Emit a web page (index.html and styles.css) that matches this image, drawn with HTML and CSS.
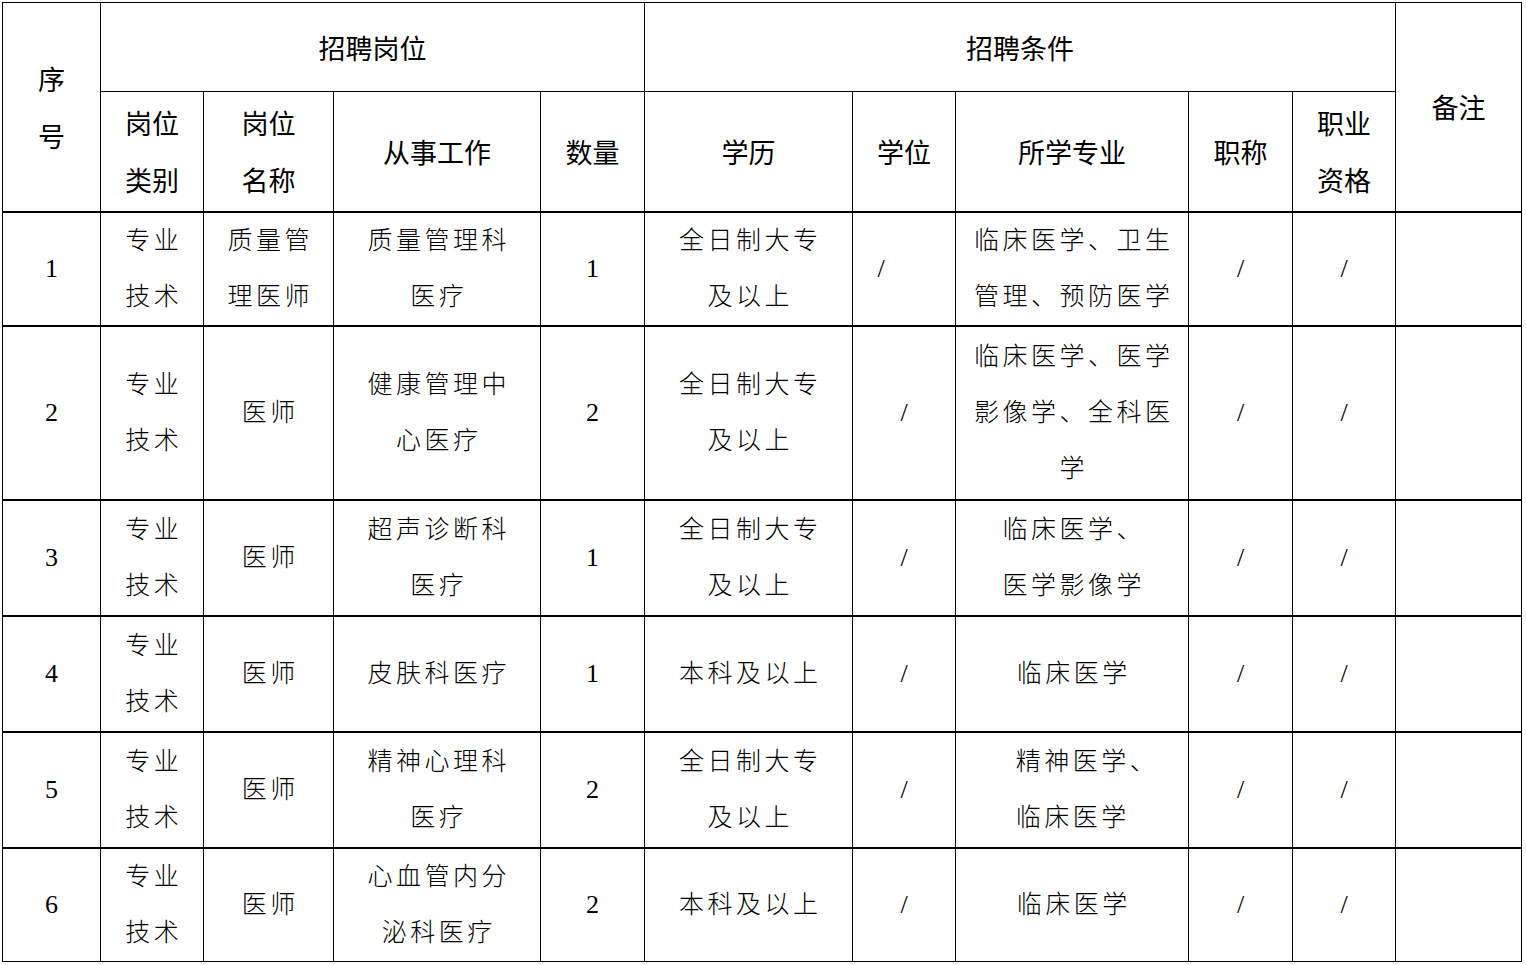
FILE: index.html
```html
<!DOCTYPE html>
<html lang="zh-CN">
<head>
<meta charset="utf-8">
<title>招聘岗位</title>
<link rel="stylesheet" href="styles.css">
</head>
<body>
<table class="tbl">
  <colgroup>
    <col class="c1"><col class="c2"><col class="c3"><col class="c4"><col class="c5"><col class="c6"><col class="c7"><col class="c8"><col class="c9"><col class="c10"><col class="c11">
  </colgroup>
  <thead>
    <tr class="h1">
      <th rowspan="2">序<br>号</th>
      <th colspan="4">招聘岗位</th>
      <th colspan="5">招聘条件</th>
      <th rowspan="2" class="note">备注</th>
    </tr>
    <tr class="h2">
      <th>岗位<br>类别</th>
      <th>岗位<br>名称</th>
      <th>从事工作</th>
      <th>数量</th>
      <th>学历</th>
      <th>学位</th>
      <th>所学专业</th>
      <th>职称</th>
      <th>职业<br>资格</th>
    </tr>
  </thead>
  <tbody>
    <tr class="r1">
      <td class="num">1</td>
      <td>专业<br>技术</td>
      <td>质量管<br>理医师</td>
      <td>质量管理科<br>医疗</td>
      <td class="num">1</td>
      <td>全日制大专<br>及以上</td>
      <td class="slash slash-left">/</td>
      <td>临床医学、卫生<br>管理、预防医学</td>
      <td class="slash">/</td>
      <td class="slash">/</td>
      <td></td>
    </tr>
    <tr class="r2">
      <td class="num">2</td>
      <td>专业<br>技术</td>
      <td>医师</td>
      <td>健康管理中<br>心医疗</td>
      <td class="num">2</td>
      <td>全日制大专<br>及以上</td>
      <td class="slash">/</td>
      <td>临床医学、医学<br>影像学、全科医<br>学</td>
      <td class="slash">/</td>
      <td class="slash">/</td>
      <td></td>
    </tr>
    <tr class="r3">
      <td class="num">3</td>
      <td>专业<br>技术</td>
      <td>医师</td>
      <td>超声诊断科<br>医疗</td>
      <td class="num">1</td>
      <td>全日制大专<br>及以上</td>
      <td class="slash">/</td>
      <td>临床医学、<br>医学影像学</td>
      <td class="slash">/</td>
      <td class="slash">/</td>
      <td></td>
    </tr>
    <tr class="r4">
      <td class="num">4</td>
      <td>专业<br>技术</td>
      <td>医师</td>
      <td>皮肤科医疗</td>
      <td class="num">1</td>
      <td>本科及以上</td>
      <td class="slash">/</td>
      <td>临床医学</td>
      <td class="slash">/</td>
      <td class="slash">/</td>
      <td></td>
    </tr>
    <tr class="r5">
      <td class="num">5</td>
      <td>专业<br>技术</td>
      <td>医师</td>
      <td>精神心理科<br>医疗</td>
      <td class="num">2</td>
      <td>全日制大专<br>及以上</td>
      <td class="slash">/</td>
      <td class="left-block"><span class="blk">精神医学、<br>临床医学</span></td>
      <td class="slash">/</td>
      <td class="slash">/</td>
      <td></td>
    </tr>
    <tr class="r6">
      <td class="num">6</td>
      <td>专业<br>技术</td>
      <td>医师</td>
      <td>心血管内分<br>泌科医疗</td>
      <td class="num">2</td>
      <td>本科及以上</td>
      <td class="slash">/</td>
      <td>临床医学</td>
      <td class="slash">/</td>
      <td class="slash">/</td>
      <td></td>
    </tr>
  </tbody>
</table>
</body>
</html>
```

FILE: styles.css
```css
html, body {
  margin: 0;
  padding: 0;
  background: #ffffff;
}

body {
  padding: 2px 0 0 2px;
}

.tbl {
  border-collapse: collapse;
  table-layout: fixed;
  width: 1519px;
  color: #000;
}

.c1 { width: 98px; }
.c2 { width: 103px; }
.c3 { width: 130px; }
.c4 { width: 207px; }
.c5 { width: 104px; }
.c6 { width: 208px; }
.c7 { width: 103px; }
.c8 { width: 233px; }
.c9 { width: 104px; }
.c10 { width: 103px; }
.c11 { width: 126px; }

.tbl th,
.tbl td {
  border: 1px solid #000;
  padding: 0;
  text-align: center;
  vertical-align: middle;
  line-height: 56px;
}

.tbl th {
  font-family: "Noto Sans CJK SC", sans-serif;
  font-weight: 400;
  font-size: 27px;
  line-height: 57px;
}

.tbl td {
  font-family: "Liberation Serif", "Noto Sans CJK SC", serif;
  font-weight: 300;
  font-size: 25px;
  letter-spacing: 3.5px;
  padding-left: 3.5px;
}

.tbl tbody td {
  border-top: 2px solid #000;
}

.h1 { height: 89px; }
.h2 { height: 120px; }
.r1 { height: 114px; }
.r2 { height: 174px; }
.r3 { height: 116px; }
.r4 { height: 116px; }
.r5 { height: 116px; }
.r6 { height: 114px; }

.tbl td.num {
  font-size: 26px;
  letter-spacing: 0;
  padding-left: 0;
}

.tbl td.slash {
  font-size: 26px;
  letter-spacing: 0;
  padding-left: 0;
}

.tbl td.slash-left {
  padding-right: 46px;
}

.tbl td.left-block {
  padding-left: 30px;
}

.blk {
  display: inline-block;
  text-align: left;
}
```
